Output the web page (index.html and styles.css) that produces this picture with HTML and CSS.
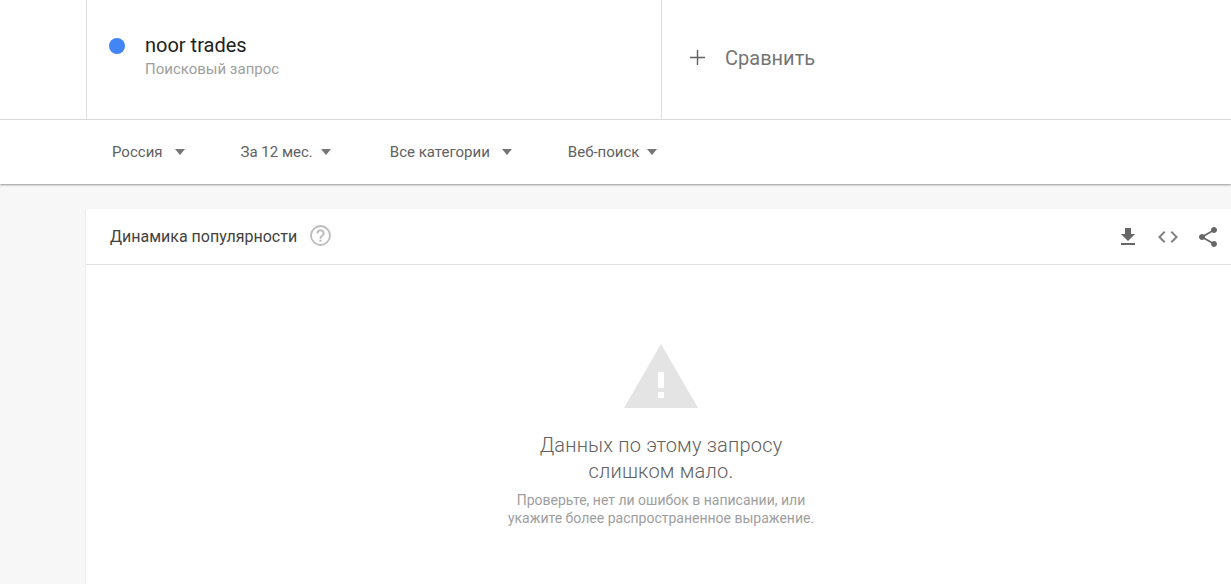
FILE: index.html
```html
<!DOCTYPE html>
<html lang="ru">
<head>
  <meta charset="UTF-8" />
  <title>Google Trends</title>
  <link rel="stylesheet" href="styles.css">
</head>
<body>

  <!-- Search terms -->
  <div class="terms">
    <div class="term">
      <span class="term-dot"></span>
      <div>
        <div class="term-name">noor trades</div>
        <div class="term-type">Поисковый запрос</div>
      </div>
    </div>
    <div class="compare">
      <svg class="compare-plus" width="15" height="15" viewBox="0 0 16 16"><path d="M7.25 0h1.500v7.250H16v1.500H8.750V16h-1.500V8.750H0v-1.500h7.250z"/></svg>
      <span>Сравнить</span>
    </div>
  </div>

  <!-- Filters -->
  <div class="filters">
    <div class="filter filter-geo">Россия<span class="arrow"></span></div>
    <div class="filter filter-time">За 12 мес.<span class="arrow arrow-near"></span></div>
    <div class="filter filter-cat">Все категории<span class="arrow"></span></div>
    <div class="filter">Веб-поиск<span class="arrow arrow-near"></span></div>
  </div>

  <!-- Chart card -->
  <div class="content">
    <div class="card">
      <div class="card-header">
        <span class="card-title">Динамика популярности</span>
        <svg class="help" width="25" height="25" viewBox="0 0 24 24"><path d="M12 2a10 10 0 1 0 0 20 10 10 0 0 0 0-20zm0 18.200a8.200 8.200 0 1 1 0-16.400 8.200 8.200 0 0 1 0 16.400zM11 16h2v2h-2zm1-10a4 4 0 0 0-4 4h2a2 2 0 1 1 4 0c0 2-3 1.750-3 5h2c0-2.250 3-2.500 3-5a4 4 0 0 0-4-4z" fill-rule="evenodd"/></svg>
        <div class="card-actions">
          <svg width="24" height="24" viewBox="0 0 24 24"><path d="M19 9h-4V3H9v6H5l7 7 7-7zM5 18v2h14v-2z"/></svg>
          <svg class="code-icon" width="24" height="24" viewBox="0 0 24 24"><path d="M9.400 16.600 4.800 12l4.600-4.600L8 6l-6 6 6 6zm5.200 0 4.600-4.600-4.600-4.600L16 6l6 6-6 6z"/></svg>
          <svg width="24" height="24" viewBox="0 0 24 24"><path d="M18 16.080c-.76 0-1.440.3-1.960.77L8.910 12.700c.05-.23.09-.46.09-.7s-.04-.47-.09-.7l7.050-4.110c.54.5 1.250.81 2.040.81 1.660 0 3-1.340 3-3s-1.340-3-3-3-3 1.340-3 3c0 .24.040.47.090.7L8.040 9.810C7.500 9.310 6.790 9 6 9c-1.660 0-3 1.340-3 3s1.340 3 3 3c.79 0 1.500-.31 2.040-.81l7.120 4.160c-.05.21-.08.43-.08.65 0 1.610 1.310 2.920 2.920 2.920s2.920-1.310 2.920-2.920-1.310-2.920-2.920-2.920z"/></svg>
        </div>
      </div>
      <div class="empty">
        <svg class="empty-icon" width="74" height="64" viewBox="0 0 74 64"><path d="M37 0 74 64H0zM34 28v16h6V28zm0 20v6h6v-6z" fill-rule="evenodd"/></svg>
        <div class="empty-title">Данных по этому запросу<br>слишком мало.</div>
        <div class="empty-text">Проверьте, нет ли ошибок в написании, или<br>укажите более распространенное выражение.</div>
      </div>
    </div>
  </div>

</body>
</html>
```

FILE: styles.css
```css
body {
  margin: 0;
  height: 584px;
  overflow: hidden;
  font-family: Roboto, Arial, sans-serif;
  background-color: #f7f7f7;
  color: #333;
}

/* TERMS */
.terms {
  display: flex;
  height: 119px;
  padding-left: 86px;
  background-color: white;
  border-bottom: 1px solid #e0e0e0;
}

.term {
  display: flex;
  align-items: center;
  width: 576px;
  padding: 0 0 9px 22px;
  box-sizing: border-box;
  border-left: 1px solid #e0e0e0;
  border-right: 1px solid #e0e0e0;
}

.term-dot {
  width: 16px;
  height: 16px;
  margin-right: 20px;
  margin-top: -18px;
  border-radius: 50%;
  background-color: #4285f4;
}

.term-name {
  font-size: 20px;
  line-height: 26px;
  color: #212121;
}

.term-type {
  margin-top: 1px;
  font-size: 15px;
  line-height: 20px;
  color: #9e9e9e;
}

.compare {
  display: flex;
  align-items: center;
  padding: 0 0 4px 28px;
  font-size: 20px;
  color: #757575;
}

.compare-plus {
  margin-right: 20px;
  fill: #616161;
}

/* FILTERS */
.filters {
  display: flex;
  align-items: center;
  height: 64px;
  padding-left: 112px;
  background-color: white;
  box-shadow: 0 1px 2px rgba(0,0,0,0.4);
  font-size: 15px;
  color: #616161;
}

.filter {
  display: flex;
  align-items: center;
}

.filter-geo { margin-right: 56px; }
.filter-time { margin-right: 59px; }
.filter-cat { margin-right: 56px; }

.arrow {
  width: 0;
  height: 0;
  margin-left: 12px;
  border-left: 5.5px solid transparent;
  border-right: 5.5px solid transparent;
  border-top: 6px solid #757575;
}

.arrow-near {
  margin-left: 8px;
}

/* CARD */
.content {
  padding: 25px 0 0 86px;
}

.card {
  height: 375px;
  background-color: white;
  box-shadow: -1px 0 1px rgba(0,0,0,0.03);
}

.card-header {
  display: flex;
  align-items: center;
  height: 55px;
  padding: 0 11.5px 0 24px;
  border-bottom: 1px solid #e0e0e0;
}

.card-title {
  font-size: 16px;
  color: #424242;
}

.help {
  margin-left: 11px;
  margin-top: -3px;
  fill: #bdbdbd;
}

.card-actions {
  display: flex;
  gap: 16px;
  margin-left: auto;
  fill: #666;
}

.code-icon {
  fill: #808080;
}

/* EMPTY STATE */
.empty {
  display: flex;
  flex-direction: column;
  align-items: center;
  padding: 79px 0 0 5px;
  text-align: center;
}

.empty-icon {
  fill: #e4e4e4;
}

.empty-title {
  margin-top: 24px;
  font-size: 20px;
  font-weight: 300;
  letter-spacing: 0.2px;
  line-height: 26px;
  color: #616161;
}

.empty-text {
  margin-top: 7px;
  font-size: 14px;
  line-height: 18px;
  color: #9e9e9e;
}
```
